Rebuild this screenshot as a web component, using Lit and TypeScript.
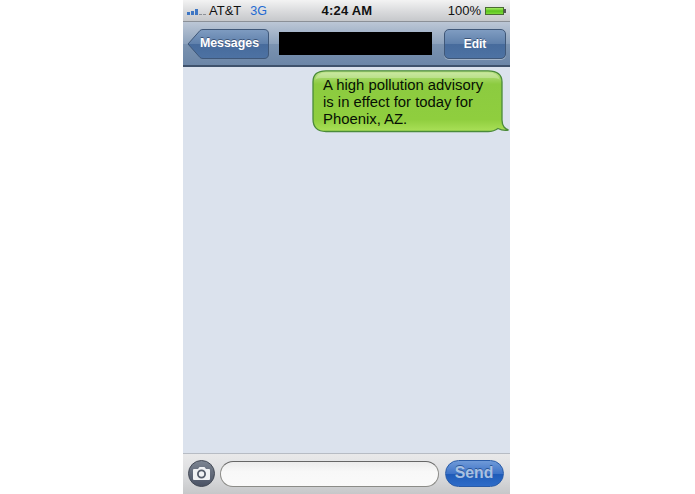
import { LitElement, html, css } from "lit";
import { customElement } from "lit/decorators.js";

@customElement("app-root")
export class AppRoot extends LitElement {
  static styles = css`
    :host { display: block; width: 695px; height: 494px; background: #fff; overflow: hidden; font-family: "Liberation Sans", Arial, sans-serif; }
    .phone { width: 327px; height: 494px; margin-left: 183px; display: flex; flex-direction: column; background: #dbe2ed; }
    .status { height: 22px; flex: none; box-sizing: border-box; display: grid; grid-template-columns: 1fr auto 1fr; align-items: center; padding: 0 4px 0 4px;
      background: linear-gradient(#f3f3f3, #d9dadc 55%, #c6c8cb); border-bottom: 1px solid #8b9097; font-size: 13px; color: #111; }
    .left { display: flex; align-items: center; }
    .signal { display: flex; align-items: flex-end; gap: 1px; height: 8px; margin-right: 2px; width: 20px; }
    .signal i { display: block; width: 3px; background: #3e76c4; }
    .signal i.off { background: #8d9197; }
    .g3 { color: #1f6ad2; margin-left: 9px; font-size: 12.5px; }
    .time { font-weight: 700; font-size: 13px; letter-spacing: 0.2px; margin-left: 1px; }
    .right { display: flex; justify-content: flex-end; align-items: center; gap: 4px; }
    .battery { width: 19px; height: 8px; background: linear-gradient(#a6ec62, #5cc41e 50%, #7edb3a); border: 1px solid #4a6b33; box-sizing: border-box; }
    .nub { width: 2px; height: 4px; background: #555; margin-left: -4px; }
    .nav { height: 45px; flex: none; box-sizing: border-box; display: flex; align-items: center; padding: 0 4px 0 4px;
      background: linear-gradient(#bcc7d6, #8ea3bd 50%, #7b93b1 51%, #6c86a7); border-bottom: 2px solid #3f526c; }
    .back-wrap { position: relative; width: 82px; height: 30px; flex: none; display: flex; }
    .back-wrap svg { position: absolute; inset: 0; }
    .back-label { position: relative; flex: 1; text-align: center; padding-left: 3px; box-sizing: border-box; line-height: 29px; font-size: 12.4px; }
    .btn-text { color: #fff; font-weight: 700; text-shadow: 0 -1px 0 #3c5478; }
    .title { width: 153px; height: 23px; background: #000; margin-left: 10px; flex: none; }
    .edit { margin-left: auto; width: 62px; height: 30px; box-sizing: border-box; border-radius: 5px; border: 1px solid #3f5778; font-size: 12px;
      background: linear-gradient(#7f9cc1, #5f80ab 50%, #476b9c 51%, #4d72a3); box-shadow: 0 1px 0 rgba(255,255,255,.35); text-align: center; line-height: 28px; }
    .thread { flex: 1; min-height: 0; display: flex; flex-direction: column; align-items: flex-end; padding: 3px 1px 0 0; }
    .bubble-wrap { position: relative; width: 197px; height: 63px; }
    .bubble-wrap svg { position: absolute; inset: 0; }
    .bubble-text { position: relative; margin: 0; padding: 7px 0 0 11px; font-size: 14.85px; line-height: 17px; color: #061003; }
    .input { height: 41px; flex: none; box-sizing: border-box; display: flex; align-items: center; padding: 0 6px 1px 5px;
      background: linear-gradient(#e9e9ea, #dcdddf 50%, #c6c7c9); border-top: 1px solid #b7bcc4; }
    .cam { width: 27px; height: 27px; flex: none; }
    .field { width: 219px; height: 26px; margin-left: 5px; box-sizing: border-box; border-radius: 13px; border: 1.5px solid #8c8c88; border-top-color: #666; background: linear-gradient(#ececec, #f8f8f8 40%, #fafafa); flex: none; }
    .send { margin-left: 6px; width: 59px; height: 27px; box-sizing: border-box; border-radius: 14px; border: 1px solid #2a5ca8; padding-right: 1px;
      background: linear-gradient(#6f9ad8, #3f74c8 50%, #1f5bb8 52%, #2e6cc8); color: #a9c1e2; font-weight: 700; font-size: 15.8px; text-align: center; line-height: 24px; text-shadow: 0 -1px 0 #2a5698; flex: none; }
  `;

  render() {
    return html`<div class="phone">
      <div class="status">
        <div class="left">
          <div class="signal"><i style="height:3px"></i><i style="height:4px"></i><i style="height:6px"></i><i class="off" style="height:1px"></i><i class="off" style="height:1px"></i></div>
          <span>AT&amp;T</span><span class="g3">3G</span>
        </div>
        <div class="time">4:24 AM</div>
        <div class="right"><span>100%</span><div class="battery"></div><div class="nub"></div></div>
      </div>
      <div class="nav">
        <div class="back-wrap">
          <svg width="82" height="30" viewBox="0 0 82 30">
            <defs><linearGradient id="bk" x1="0" y1="0" x2="0" y2="1">
              <stop offset="0" stop-color="#7f9cc1"/><stop offset=".5" stop-color="#5f80ab"/><stop offset=".51" stop-color="#476b9c"/><stop offset="1" stop-color="#4d72a3"/>
            </linearGradient></defs>
            <path d="M1 15 L13 1.5 Q14 .5 16 .5 H77 Q81.5 .5 81.5 5 V25 Q81.5 29.5 77 29.5 H16 Q14 29.5 13 28.5 Z" fill="url(#bk)" stroke="#3f5778"/>
          </svg>
          <div class="back-label btn-text">Messages</div>
        </div>
        <div class="title"></div>
        <div class="edit btn-text">Edit</div>
      </div>
      <div class="thread">
        <div class="bubble-wrap">
          <svg width="197" height="63" viewBox="0 0 197 63">
            <defs>
              <linearGradient id="gr" x1="0" y1="0" x2="0" y2="1">
                <stop offset="0" stop-color="#bde38a"/><stop offset=".22" stop-color="#8ccb40"/><stop offset=".8" stop-color="#8fce3e"/><stop offset="1" stop-color="#aae058"/>
              </linearGradient>
            </defs>
            <path d="M14 .8 H176 Q190 .8 190 12 V50 Q190 54 192 57 Q194 59.5 196.5 60 Q191 61 186 58.5 Q182 61.5 176 61.5 H14 Q1 61.5 1 49 V12 Q1 .8 14 .8 Z" fill="url(#gr)" stroke="#4a8a3a" stroke-width="1.3"/>
            <path d="M14 2.5 H176 Q187 2.5 188 11 Q188 8 181 8 H10 Q3 8 2.8 11 Q4 2.5 14 2.5 Z" fill="#fff" opacity=".25"/>
          </svg>
          <p class="bubble-text">A high pollution advisory<br>is in effect for today for<br>Phoenix, AZ.</p>
        </div>
      </div>
      <div class="input">
        <svg class="cam" viewBox="0 0 27 27">
          <defs><linearGradient id="cg" x1="0" y1="0" x2="0" y2="1"><stop offset="0" stop-color="#7d8592"/><stop offset="1" stop-color="#4a5264"/></linearGradient></defs>
          <circle cx="13.5" cy="13.5" r="13" fill="url(#cg)" stroke="#454b57"/>
          <path d="M6 9 H10 L11.5 7 H16.5 L18 9 H21 Q22 9 22 10 V19 Q22 20 21 20 H6 Q5 20 5 19 V10 Q5 9 6 9 Z" fill="#f1f2f4"/>
          <circle cx="13.5" cy="14" r="3.6" fill="none" stroke="#555c6a" stroke-width="1.8"/>
        </svg>
        <div class="field"></div>
        <div class="send">Send</div>
      </div>
    </div>`;
  }
}
